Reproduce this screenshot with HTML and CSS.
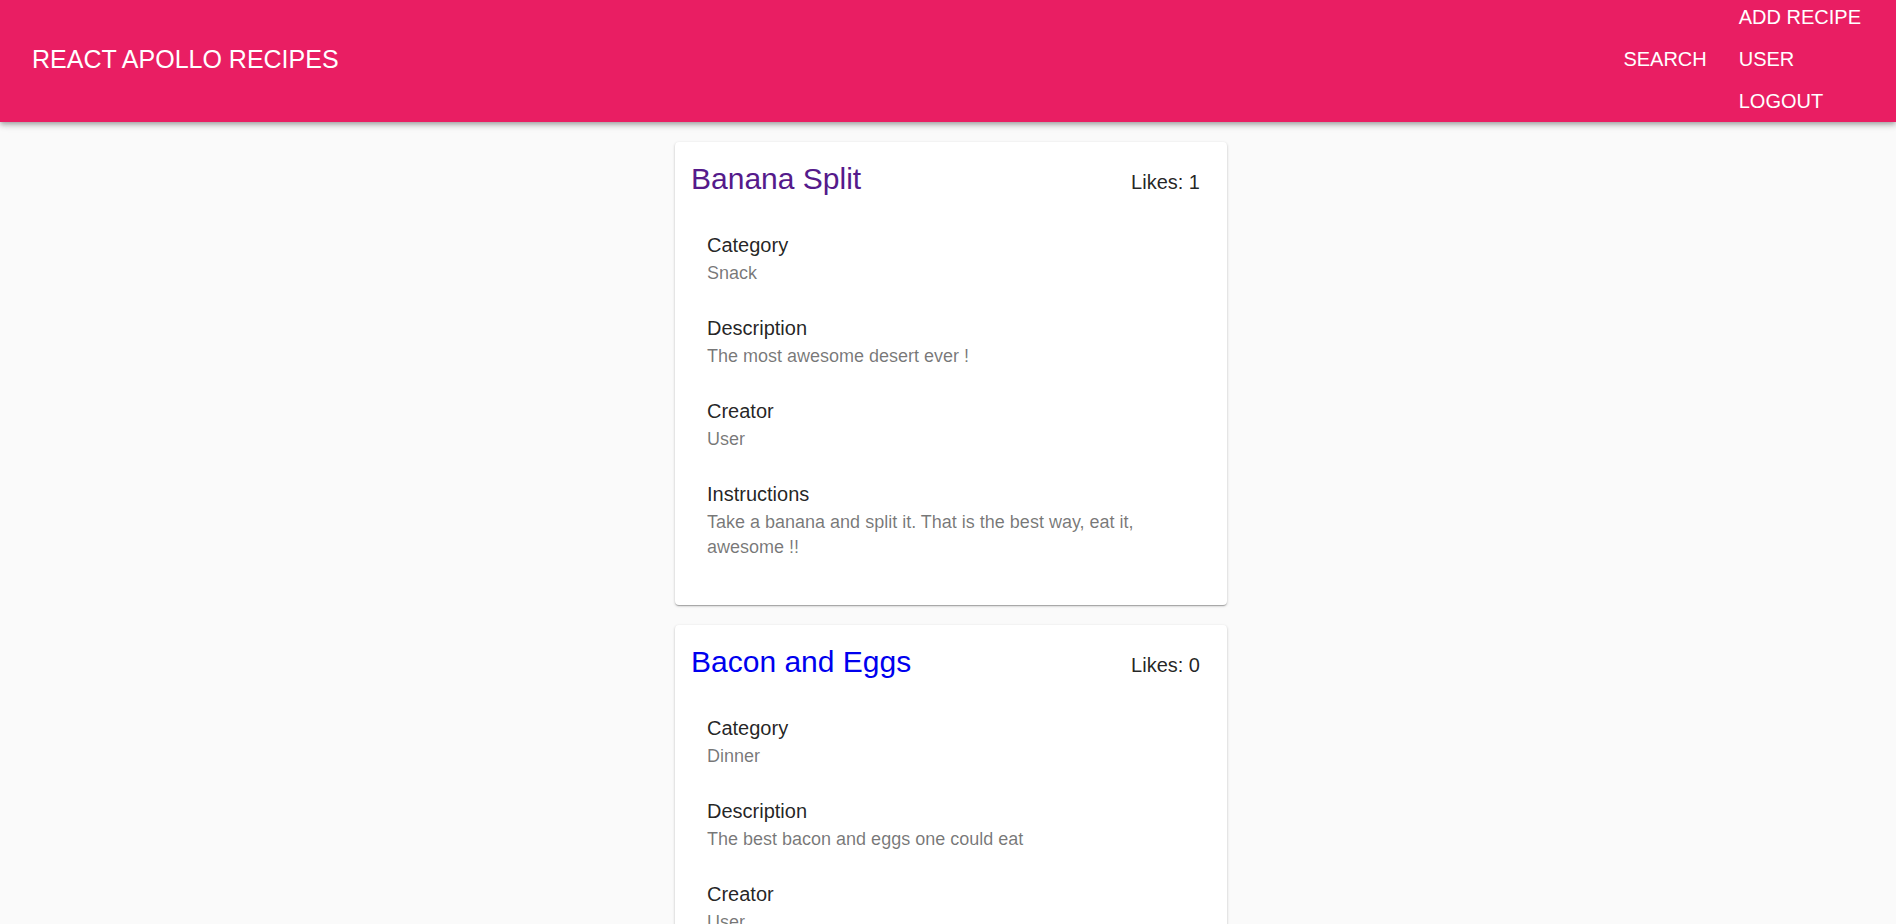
FILE: index.html
```html
<!DOCTYPE html>
<html lang="en">
<head>
<meta charset="utf-8">
<title>React Apollo Recipes</title>
<link rel="stylesheet" href="styles.css">
</head>
<body>
<header class="app-bar">
  <a class="brand" href="#">REACT APOLLO RECIPES</a>
  <nav class="nav">
    <a class="nav-link" href="#">SEARCH</a>
    <div class="nav-group">
      <a class="nav-link" href="#">ADD RECIPE</a>
      <a class="nav-link" href="#">USER</a>
      <a class="nav-link" href="#">LOGOUT</a>
    </div>
  </nav>
</header>
<main class="recipes">
  <article class="card">
    <div class="card-head">
      <h2 class="title"><a class="visited" href="#">Banana Split</a></h2>
      <p class="likes">Likes: 1</p>
    </div>
    <dl class="details">
      <div class="item"><dt>Category</dt><dd>Snack</dd></div>
      <div class="item"><dt>Description</dt><dd>The most awesome desert ever !</dd></div>
      <div class="item"><dt>Creator</dt><dd>User</dd></div>
      <div class="item"><dt>Instructions</dt><dd>Take a banana and split it. That is the best way, eat it, awesome !!</dd></div>
    </dl>
  </article>
  <article class="card">
    <div class="card-head">
      <h2 class="title"><a href="#">Bacon and Eggs</a></h2>
      <p class="likes">Likes: 0</p>
    </div>
    <dl class="details">
      <div class="item"><dt>Category</dt><dd>Dinner</dd></div>
      <div class="item"><dt>Description</dt><dd>The best bacon and eggs one could eat</dd></div>
      <div class="item"><dt>Creator</dt><dd>User</dd></div>
    </dl>
  </article>
</main>
</body>
</html>
```
FILE: styles.css
```css
* {
  box-sizing: border-box;
}

body {
  margin: 0;
  background: #fafafa;
  color: rgba(0, 0, 0, 0.87);
  font-family: "Liberation Sans", Arial, sans-serif;
  font-size: 20px;
}

h2,
p,
dl,
dd {
  margin: 0;
  font-weight: 400;
}

.app-bar {
  display: flex;
  align-items: center;
  justify-content: space-between;
  padding: 1px 35px 5px 32px;
  background: #e91e63;
  box-shadow: 0 2px 4px -1px rgba(0, 0, 0, 0.2), 0 4px 5px rgba(0, 0, 0, 0.14), 0 1px 10px rgba(0, 0, 0, 0.12);
}

.brand,
.nav-link {
  color: #fff;
  text-decoration: none;
}

.brand {
  font-size: 25px;
}

.nav {
  display: flex;
  align-items: center;
  gap: 32px;
}

.nav-group {
  display: flex;
  flex-direction: column;
  gap: 10px;
}

.nav-link {
  line-height: 32px;
}

.recipes {
  display: flex;
  flex-direction: column;
  align-items: center;
  gap: 20px;
  padding: 20px 0 20px 6px;
}

.card {
  width: 100%;
  max-width: 552px;
  padding: 16px;
  border-radius: 4px;
  background: #fff;
  box-shadow: 0 1px 3px rgba(0, 0, 0, 0.2), 0 1px 1px rgba(0, 0, 0, 0.14), 0 2px 1px -1px rgba(0, 0, 0, 0.12);
}

.card-head {
  display: flex;
  align-items: baseline;
  justify-content: space-between;
  padding-right: 11px;
}

.title {
  font-size: 30px;
  line-height: 42px;
}

.title a {
  color: #0000ee;
  text-decoration: none;
}

.title .visited {
  color: #551a8b;
}

.details {
  padding: 16px;
}

.item {
  padding: 13px 0;
}

.item dt {
  line-height: 32px;
}

.item dd {
  color: rgba(0, 0, 0, 0.54);
  font-size: 18px;
  line-height: 25px;
}
```
